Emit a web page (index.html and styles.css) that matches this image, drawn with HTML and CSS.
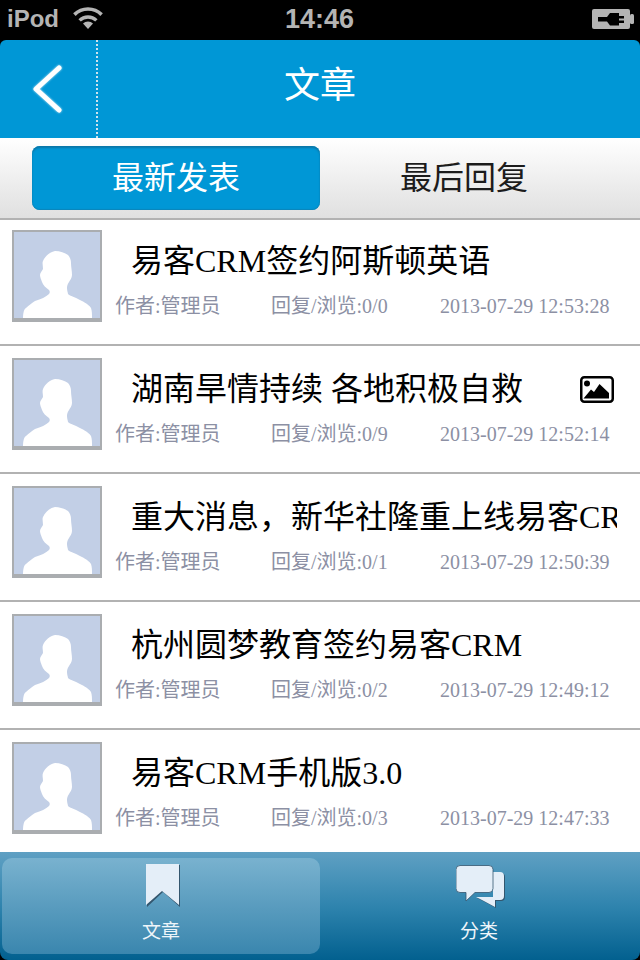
FILE: index.html
```html
<!DOCTYPE html>
<html lang="zh">
<head>
<meta charset="utf-8">
<title>文章</title>
<link rel="stylesheet" href="styles.css">
</head>
<body>
<div class="screen">
  <div class="status">
    <div class="status-left">
      <span>iPod</span>
      <svg class="wifi" width="32" height="24" viewBox="0 0 32 24"><path d="M16 24l-5-5.500a7 7 0 0 1 10 0z" fill="#b4b4b4"/><path d="M7.600 15.400a12 12 0 0 1 16.800 0" fill="none" stroke="#b4b4b4" stroke-width="3.400"/><path d="M2.400 9.600a19.500 19.500 0 0 1 27.200 0" fill="none" stroke="#b4b4b4" stroke-width="3.600"/></svg>
    </div>
    <span class="clock">14:46</span>
    <svg class="battery" width="42" height="22" viewBox="0 0 42 22"><rect x="0" y="1" width="38" height="20" rx="2" fill="#b4b4b4"/><rect x="38" y="6" width="4" height="10" rx="1.500" fill="#b4b4b4"/><path d="M6 9h9l3-4h9v3h5v2.500h-5v2h5v2.500h-5v2.500h-9l-3-4h-9z" fill="#000"/></svg>
  </div>
  <header class="nav">
    <button class="back" aria-label="返回">
      <svg class="chevron" width="34" height="52" viewBox="0 0 34 52"><path d="M29 5L6 26l23 21" fill="none" stroke="#fff" stroke-width="5" stroke-linecap="round" stroke-linejoin="round"/></svg>
    </button>
    <h1 class="nav-title">文章</h1>
  </header>
  <div class="tabs">
    <div class="tab tab-active">最新发表</div>
    <div class="tab">最后回复</div>
  </div>
  <main class="list">
    <article class="row">
      <svg class="avatar" viewBox="0 0 90 92"><use href="#person"/></svg>
      <div class="body">
        <div class="title-line"><span class="title">易客CRM签约阿斯顿英语</span></div>
        <div class="meta"><span>作者:管理员</span><span>回复/浏览:0/0</span><span>2013-07-29 12:53:28</span></div>
      </div>
    </article>
    <article class="row">
      <svg class="avatar" viewBox="0 0 90 92"><use href="#person"/></svg>
      <div class="body">
        <div class="title-line"><span class="title">湖南旱情持续 各地积极自救</span>
          <svg class="pic" width="34" height="27" viewBox="0 0 34 27"><rect x="1.250" y="1.250" width="31.500" height="24.500" rx="3" fill="#fff" stroke="#000" stroke-width="2.500"/><circle cx="7" cy="7.500" r="3" fill="#000"/><path d="M3.500 22.500L11 13.500l3 2.500 5.500-8 9.500 9v5.500z" fill="#000"/></svg>
        </div>
        <div class="meta"><span>作者:管理员</span><span>回复/浏览:0/9</span><span>2013-07-29 12:52:14</span></div>
      </div>
    </article>
    <article class="row">
      <svg class="avatar" viewBox="0 0 90 92"><use href="#person"/></svg>
      <div class="body">
        <div class="title-line"><span class="title">重大消息，新华社隆重上线易客CRM</span></div>
        <div class="meta"><span>作者:管理员</span><span>回复/浏览:0/1</span><span>2013-07-29 12:50:39</span></div>
      </div>
    </article>
    <article class="row">
      <svg class="avatar" viewBox="0 0 90 92"><use href="#person"/></svg>
      <div class="body">
        <div class="title-line"><span class="title">杭州圆梦教育签约易客CRM</span></div>
        <div class="meta"><span>作者:管理员</span><span>回复/浏览:0/2</span><span>2013-07-29 12:49:12</span></div>
      </div>
    </article>
    <article class="row">
      <svg class="avatar" viewBox="0 0 90 92"><use href="#person"/></svg>
      <div class="body">
        <div class="title-line"><span class="title">易客CRM手机版3.0</span></div>
        <div class="meta"><span>作者:管理员</span><span>回复/浏览:0/3</span><span>2013-07-29 12:47:33</span></div>
      </div>
    </article>
  </main>
  <nav class="bar">
    <div class="bar-item bar-active">
      <svg width="38" height="46" viewBox="0 0 38 46"><path d="M5 1h33v42L21 28 5 43z" fill="#33566e"/><path d="M4 0h33v41L20 27 4 41z" fill="#e4eef8"/></svg>
      <span>文章</span>
    </div>
    <div class="bar-item">
      <svg class="chat" width="50" height="46" viewBox="0 0 50 46"><path d="M38 9h7a4 4 0 0 1 4 4v20a4 4 0 0 1-4 4h-5v7L27 37l-6-3h17z" fill="#33566e"/><path d="M37 8h7a4 4 0 0 1 4 4v20a4 4 0 0 1-4 4h-5v7L26 36l-6-3h17z" fill="#e4eef8"/><path d="M4 1.500h29a4 4 0 0 1 4 4v19a4 4 0 0 1-4 4H19l-9 8.500v-8.500H4a4 4 0 0 1-4-4v-19a4 4 0 0 1 4-4z" fill="#e4eef8" stroke="#33566e" stroke-width=".8"/></svg>
      <span>分类</span>
    </div>
  </nav>
</div>
<svg class="defs" width="0" height="0">
  <symbol id="person" viewBox="0 0 90 92">
    <rect width="90" height="92" fill="#aaadb0"/>
    <rect x="2" y="2" width="86" height="86" fill="#c2cfe6"/>
    <path d="M11 88c0-5 1-9 3-10 3-3 6-5 9-7 6-2 11-4 14-7 1-1 1-3 0-4-3-2-6-5-7-8-1-3-2-5-2-7 0-2 2-4 3-6 0-3-1-6 0-8 2-5 7-9 12-10 5 0 10 2 13 4 2 2 3 5 3 8 0 4 1 8 1 12 0 3-2 5-3 7-2 3-2 5-2 6 0 3 1 5 1 6 2 2 7 3 14 7 4 2 8 5 9 7 1 3 1 6 1 10z" fill="#fff"/>
  </symbol>
</svg>
</body>
</html>
```
FILE: styles.css
```css
* { box-sizing: border-box; }
html, body { margin: 0; padding: 0; background: #000; }
.screen {
  width: 640px;
  height: 960px;
  display: flex;
  flex-direction: column;
  overflow: hidden;
  font-family: "Liberation Serif", "Noto Sans CJK SC", serif;
  background: #000;
}
.status {
  height: 40px;
  display: flex;
  align-items: center;
  justify-content: space-between;
  padding: 0 6px 2px 7px;
  position: relative;
  color: #b4b4b4;
  font: 700 27px "Liberation Sans", sans-serif;
}
.status-left { display: flex; align-items: center; gap: 13px; font-size: 24px; }
.wifi { margin-top: -5px; }
.clock { font-size: 27px; position: absolute; left: 285px; top: 4px; }
.nav {
  height: 98px;
  display: flex;
  align-items: center;
  position: relative;
  background: #0097d6;
  border-radius: 6px 6px 0 0;
}
.back {
  width: 98px;
  height: 98px;
  padding: 0 0 0 30px;
  display: flex;
  align-items: center;
  background: none;
  border: 0;
  border-right: 2px dotted #cfe3ee;
}
.chevron { filter: drop-shadow(0 0 1px rgba(255, 255, 255, .8)); }
.nav-title {
  position: absolute;
  left: 0;
  right: 0;
  top: 24px;
  margin: 0;
  text-align: center;
  color: #fff;
  font: 400 36px/1 "Noto Sans CJK SC", sans-serif;
}
.tabs {
  height: 82px;
  display: grid;
  grid-template-columns: 288px 288px;
  padding: 8px 32px 0;
  background: linear-gradient(#fff, #ececec 60%, #e0e0e0);
  border-bottom: 2px solid #b2b2b2;
}
.tab {
  display: flex;
  align-items: center;
  justify-content: center;
  height: 64px;
  padding-bottom: 7px;
  border-radius: 8px;
  color: #1c1c1c;
  font: 400 32px/1 "Noto Sans CJK SC", sans-serif;
}
.tab-active {
  color: #fff;
  background: #0097d6;
  box-shadow: inset 0 2px 2px #0a77a8, inset 0 -1px 1px #0a86bb;
}
.list { flex: 1; background: #fff; overflow: hidden; }
.row {
  height: 128px;
  display: flex;
  align-items: flex-start;
  gap: 13px;
  padding: 12px 0 0 12px;
  border-bottom: 2px solid #b2b2b2;
}
.row:first-child { height: 126px; padding-top: 10px; }
.avatar { width: 90px; height: 92px; flex: none; }
.body { flex: 1; min-width: 0; padding-right: 23px; }
.title-line {
  height: 63px;
  padding: 0 0 1px 16px;
  display: flex;
  align-items: center;
}
.title {
  font-size: 32px;
  line-height: 38px;
  color: #000;
  white-space: nowrap;
  overflow: hidden;
  flex: 1;
  min-width: 0;
}
.pic { flex: none; margin-right: 3px; }
.meta {
  display: grid;
  grid-template-columns: 156px 169px auto;
  color: #8c90a4;
  font-size: 20px;
  line-height: 26px;
  white-space: nowrap;
}
.bar {
  height: 108px;
  display: grid;
  grid-template-columns: 320px 320px;
  background: linear-gradient(#5fa0c3, #2f84ae 50%, #02608f);
  border-radius: 0 0 8px 8px;
}
.bar-item {
  display: flex;
  flex-direction: column;
  align-items: center;
  color: #eef5fa;
  font: 400 19px/24px "Noto Sans CJK SC", sans-serif;
  padding: 12px 2px 0 0;
  gap: 8px;
}
.bar-item svg { height: 46px; flex: none; }
.bar-item .chat { margin-left: 4px; }
.bar-active {
  margin: 6px 0 6px 2px;
  padding: 6px 0 0;
  border-radius: 10px;
  background: linear-gradient(#79b2cf, #3a86ae);
}
.defs { position: absolute; }
```
